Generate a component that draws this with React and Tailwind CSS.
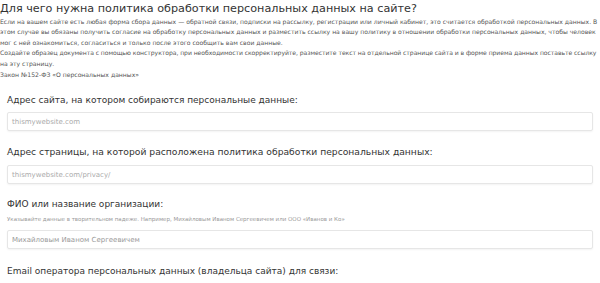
export default function App() {
  const font = { fontFamily: '"DejaVu Sans", "Open Sans", sans-serif' };
  const input = "h-[19px] border border-[#e6e6e6] rounded-[2px] shadow-[0_1px_2px_rgba(0,0,0,0.05)] flex items-center px-[4px] text-[7px]";
  return (
    <div className="w-[600px] h-[283px] overflow-hidden bg-white text-[#333]" style={font}>
      <div>
        <h1 className="text-[11.2px] leading-[16px] pt-[1px] font-normal text-[#333]">
          Для чего нужна политика обработки персональных данных на сайте?
        </h1>
        <p className="text-[6.1px] leading-[10.4px] text-[#555]">
          <span className="block whitespace-nowrap">Если на вашем сайте есть любая форма сбора данных — обратной связи, подписки на рассылку, регистрации или личный кабинет, это считается обработкой персональных данных. В</span>
          <span className="block whitespace-nowrap">этом случае вы обязаны получить согласие на обработку персональных данных и разместить ссылку на вашу политику в отношении обработки персональных данных, чтобы человек</span>
          <span className="block whitespace-nowrap">мог с ней ознакомиться, согласиться и только после этого сообщить вам свои данные.</span>
        </p>
        <p className="text-[6.1px] leading-[10.4px] text-[#555]">
          <span className="block whitespace-nowrap tracking-[-0.06px]">Создайте образец документа с помощью конструктора, при необходимости скорректируйте, разместите текст на отдельной странице сайта и в форме приема данных поставьте ссылку</span>
          <span className="block whitespace-nowrap">на эту страницу.</span>
        </p>
        <p className="mt-[1px] text-[6.1px] leading-[10.4px] text-[#555]">Закон №152-ФЗ «О персональных данных»</p>
      </div>
      <div className="px-[7px]">
        <label className="block mt-[13px] text-[9px] leading-[14px] text-[#333]">Адрес сайта, на котором собираются персональные данные:</label>
        <div className={`mt-[5px] ${input} text-[#aaa]`}>thismywebsite.com</div>
        <label className="block mt-[14px] text-[9.2px] leading-[14px] text-[#333]">Адрес страницы, на которой расположена политика обработки персональных данных:</label>
        <div className={`mt-[6px] ${input} text-[#aaa]`}>thismywebsite.com/privacy/</div>
        <label className="block mt-[13px] text-[9px] leading-[14px] text-[#333]">ФИО или название организации:</label>
        <p className="mt-[4px] text-[5.5px] leading-[8px] text-[#999] whitespace-nowrap">Указывайте данные в творительном падеже. Например, Михайловым Иваном Сергеевичем или ООО «Иванов и Ко»</p>
        <div className={`mt-[7px] h-[18px] ${input} text-[#999]`}>Михайловым Иваном Сергеевичем</div>
        <label className="block mt-[15px] text-[9px] leading-[14px] text-[#333]">Email оператора персональных данных (владельца сайта) для связи:</label>
      </div>
    </div>
  );
}
